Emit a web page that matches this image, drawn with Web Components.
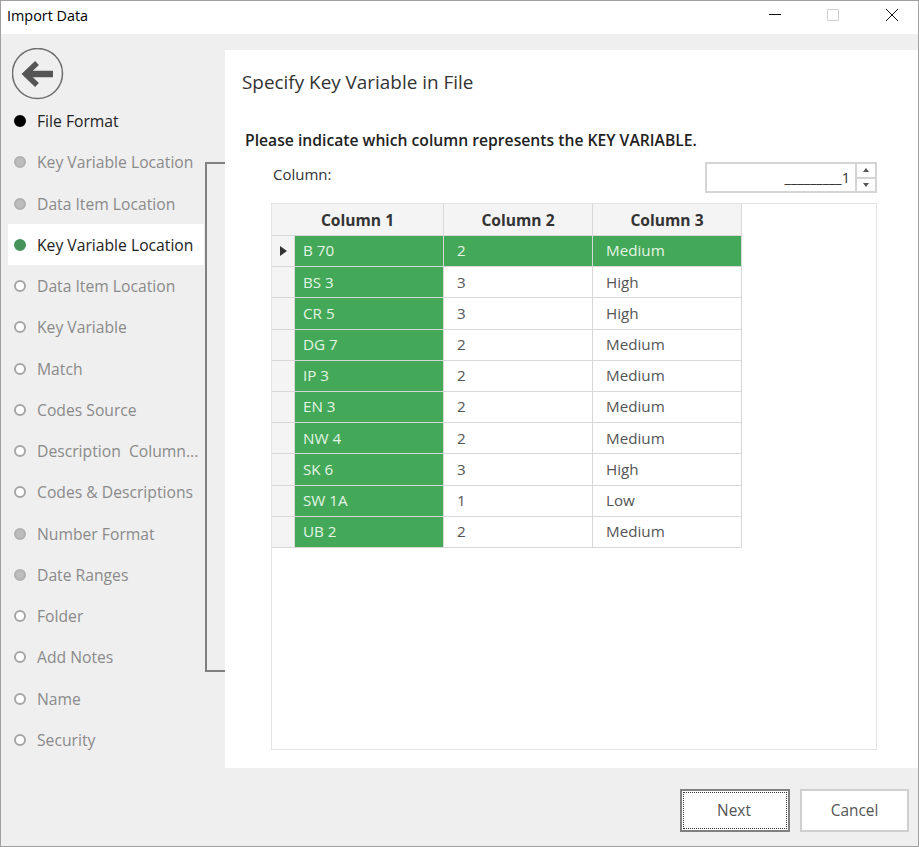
<!DOCTYPE html>
<html>
<head>
<meta charset="utf-8">
<title>Import Data</title>
<style>
  html, body { margin: 0; padding: 0; height: 100%; background: #efefef; }
  body { font-family: "Open Sans", "Noto Sans", sans-serif; }
</style>
</head>
<body>
<import-window>
  <title-bar slot="title">Import Data</title-bar>
  <wizard-nav slot="nav">
    <nav-step state="done">File Format</nav-step>
    <nav-step state="past">Key Variable Location</nav-step>
    <nav-step state="past">Data Item Location</nav-step>
    <nav-step state="current">Key Variable Location</nav-step>
    <nav-step>Data Item Location</nav-step>
    <nav-step>Key Variable</nav-step>
    <nav-step>Match</nav-step>
    <nav-step>Codes Source</nav-step>
    <nav-step>Description&nbsp; Column...</nav-step>
    <nav-step>Codes &amp; Descriptions</nav-step>
    <nav-step state="past">Number Format</nav-step>
    <nav-step state="past">Date Ranges</nav-step>
    <nav-step>Folder</nav-step>
    <nav-step>Add Notes</nav-step>
    <nav-step>Name</nav-step>
    <nav-step>Security</nav-step>
  </wizard-nav>
  <key-panel slot="main"></key-panel>
  <wiz-button slot="footer" default>Next</wiz-button>
  <wiz-button slot="footer" style="width:109px">Cancel</wiz-button>
</import-window>

<script>
class ImportWindow extends HTMLElement {
  constructor() {
    super();
    this.attachShadow({ mode: "open" });
    this.shadowRoot.innerHTML = `
      <style>
        :host {
          display: grid;
          box-sizing: border-box;
          width: 919px;
          height: 847px;
          border: 1px solid #a0a0a0;
          background: #efefef;
          grid-template-columns: 224px 1fr;
          grid-template-rows: 33px 16px 718px 1fr;
          grid-template-areas: "title title" "gap gap" "nav main" "nav footer";
        }
        .title { grid-area: title; }
        .nav { grid-area: nav; min-width: 0; }
        .main { grid-area: main; background: #fff; min-width: 0; }
        .footer {
          grid-area: footer;
          display: flex;
          justify-content: flex-end;
          gap: 10px;
          padding: 21px 9px 0 0;
        }
      </style>
      <div class="title"><slot name="title"></slot></div>
      <div class="nav"><slot name="nav"></slot></div>
      <div class="main"><slot name="main"></slot></div>
      <div class="footer"><slot name="footer"></slot></div>
    `;
  }
}

class TitleBar extends HTMLElement {
  constructor() {
    super();
    this.attachShadow({ mode: "open" });
    this.shadowRoot.innerHTML = `
      <style>
        :host {
          display: flex;
          align-items: center;
          height: 33px;
          background: #fff;
          color: #000;
          font-size: 14.4px;
          padding-left: 6px;
        }
        .text { flex: 1; position: relative; top: -2px; }
        svg { display: block; }
        .controls { display: flex; align-items: flex-start; height: 33px; gap: 46px; padding: 8px 20px 0 0; box-sizing: border-box; }
        .close { margin-left: 1px; }
      </style>
      <span class="text"><slot></slot></span>
      <div class="controls">
        <svg width="12" height="12" viewBox="0 0 12 12"><path d="M0 5.500h12" stroke="#111" fill="none"/></svg>
        <svg width="12" height="12" viewBox="0 0 12 12"><path d="M.5 .5h11v11H.5z" stroke="#cfcfcf" fill="none"/></svg>
        <svg class="close" width="12" height="12" viewBox="0 0 12 12"><path d="M0 0l12 12M12 0L0 12" stroke="#111" fill="none"/></svg>
      </div>
    `;
  }
}

class WizardNav extends HTMLElement {
  constructor() {
    super();
    this.attachShadow({ mode: "open" });
    this.shadowRoot.innerHTML = `
      <style>
        :host {
          display: flex;
          flex-direction: column;
          position: relative;
          height: 100%;
          padding-left: 7px;
          box-sizing: border-box;
        }
        .back { display: block; margin: -2px 0 0 4px; flex: none; }
        .list { margin-top: .4px; width: 196px; }
        .thumb {
          position: absolute;
          left: 204px;
          top: 112px;
          width: 20px;
          height: 510px;
          box-sizing: border-box;
          border: 2px solid #808080;
          border-right: 0;
        }
      </style>
      <svg class="back" width="52" height="52" viewBox="0 0 52 52">
        <circle cx="25.500" cy="25.500" r="25" fill="none" stroke="#6e6e6e" stroke-width="1.5"/>
        <path d="M41 26H15" stroke="#555" stroke-width="6.500" fill="none"/>
        <path d="M25 15 L13.500 26 L25 37" stroke="#555" stroke-width="5.500" fill="none"/>
      </svg>
      <div class="list"><slot></slot></div>
      <div class="thumb"></div>
    `;
  }
}

class NavStep extends HTMLElement {
  constructor() {
    super();
    this.attachShadow({ mode: "open" });
    this.shadowRoot.innerHTML = `
      <style>
        :host {
          display: flex;
          align-items: center;
          height: 41.27px;
          box-sizing: border-box;
          padding-left: 6px;
          font-size: 15.7px;
          color: #8a8a8a;
          white-space: nowrap;
          overflow: hidden;
        }
        .dot {
          width: 12px;
          height: 12px;
          box-sizing: border-box;
          border-radius: 50%;
          border: 2px solid #a6a6a6;
          background: #fff;
          margin-right: 11px;
          flex: none;
        }
        :host([state="done"]) { color: #222; }
        :host([state="done"]) .dot { background: #000; border-color: #000; }
        :host([state="past"]) .dot { background: #bdbdbd; border-color: #b0b0b0; }
        :host([state="current"]) { background: #fff; color: #222; }
        :host([state="current"]) .dot { background: #43935a; border-color: #43935a; }
      </style>
      <span class="dot"></span><span><slot></slot></span>
    `;
  }
}

class SpinEdit extends HTMLElement {
  constructor() {
    super();
    this.attachShadow({ mode: "open" });
    this.shadowRoot.innerHTML = `
      <style>
        :host {
          display: flex;
          box-sizing: border-box;
          width: 172px;
          height: 31px;
          border: 2px solid #d4d4d4;
          background: #fff;
          color: #333;
          font-size: 14.5px;
        }
        .value { flex: 1; text-align: right; line-height: 27px; padding-right: 5px; white-space: nowrap; overflow: hidden; }
        .btns { border-left: 2px solid #d4d4d4; display: flex; flex-direction: column; width: 18px; }
        .btns div { flex: 1; display: flex; align-items: center; justify-content: center; }
        .btns div + div { border-top: 2px solid #d4d4d4; }
        i { display: block; width: 0; height: 0; border: 3.5px solid transparent; }
        .up { border-bottom: 4px solid #555; border-top: 0; }
        .down { border-top: 4px solid #555; border-bottom: 0; }
      </style>
      <span class="value"><slot></slot></span>
      <div class="btns"><div><i class="up"></i></div><div><i class="down"></i></div></div>
    `;
  }
}

class DataGrid extends HTMLElement {
  constructor() {
    super();
    this.attachShadow({ mode: "open" });
    const rows = [
      ["B 70", "2", "Medium"], ["BS 3", "3", "High"], ["CR 5", "3", "High"],
      ["DG 7", "2", "Medium"], ["IP 3", "2", "Medium"], ["EN 3", "2", "Medium"],
      ["NW 4", "2", "Medium"], ["SK 6", "3", "High"], ["SW 1A", "1", "Low"],
      ["UB 2", "2", "Medium"]
    ];
    const body = rows.map((r, i) => `
      <div class="ind">${i === 0 ? '<i></i>' : ''}</div>
      <div class="cell key">${r[0]}</div>
      <div class="cell ${i === 0 ? 'sel' : ''}">${r[1]}</div>
      <div class="cell ${i === 0 ? 'sel' : ''}">${r[2]}</div>`).join("");
    this.shadowRoot.innerHTML = `
      <style>
        :host {
          display: block;
          box-sizing: border-box;
          width: 606px;
          height: 547px;
          border: 1px solid #e3e3e3;
          background: #fff;
          font-size: 15.2px;
          color: #555;
        }
        .grid {
          display: grid;
          grid-template-columns: 23px 149px 149px 149px;
          grid-template-rows: 32px repeat(10, 31.2px);
          width: max-content;
        }
        .grid > div { box-sizing: border-box; border-right: 1px solid #d8d8d8; border-bottom: 1px solid #d8d8d8; }
        .head {
          background: #f4f4f4;
          font-weight: 700;
          color: #333;
          display: flex;
          align-items: center;
          justify-content: center;
          font-size: 15.6px;
        }
        .corner { grid-column: 1 / 3; }
        .ind { background: #f4f4f4; display: flex; align-items: center; justify-content: center; }
        .ind i { width: 0; height: 0; border: 5px solid transparent; border-left: 7px solid #333; border-right: 0; }
        .cell { display: flex; align-items: center; padding-left: 13px; line-height: 1; }
        .grid > .key { background: #43a857; color: #e4f4e6; padding-left: 8px; }
        .grid > .sel { background: #43a857; color: #e4f4e6; }
      </style>
      <div class="grid">
        <div class="head corner">Column 1</div>
        <div class="head">Column 2</div>
        <div class="head">Column 3</div>
        ${body}
      </div>
    `;
  }
}

class KeyPanel extends HTMLElement {
  constructor() {
    super();
    this.attachShadow({ mode: "open" });
    this.shadowRoot.innerHTML = `
      <style>
        :host { display: block; height: 100%; padding: 0 0 0 17px; box-sizing: border-box; color: #333; }
        h1 { margin: 0; font-size: 18.9px; font-weight: 400; line-height: 24px; padding-top: 20px; height: 44px; color: #333; }
        .ask { margin: 16px 0 0 3px; font-size: 15.7px; font-weight: 600; line-height: 20px; color: #222; height: 20px; white-space: nowrap; }
        .col { display: flex; justify-content: space-between; align-items: flex-start; margin: 12px 0 0 31px; width: 604px; height: 41px; }
        .col span { font-size: 15px; line-height: 20px; padding-top: 2px; }
        .wrap { margin-left: 29px; }
      </style>
      <h1>Specify Key Variable in File</h1>
      <div class="ask">Please indicate which column represents the KEY VARIABLE.</div>
      <div class="col"><span>Column:</span><spin-edit>_________1</spin-edit></div>
      <div class="wrap"><data-grid></data-grid></div>
    `;
  }
}

class WizButton extends HTMLElement {
  constructor() {
    super();
    this.attachShadow({ mode: "open" });
    this.shadowRoot.innerHTML = `
      <style>
        :host {
          display: flex;
          align-items: center;
          justify-content: center;
          box-sizing: border-box;
          width: 110px;
          height: 43px;
          background: #fff;
          border: 2px solid #cfcfcf;
          color: #555;
          font-size: 15.4px;
          position: relative;
        }
        :host([default]) { border-color: #808080; padding-right: 2px; }
        :host([default]) .focus {
          position: absolute;
          inset: 1px;
          border: 1px dotted #333;
        }
      </style>
      <div class="focus"></div>
      <slot></slot>
    `;
  }
}

customElements.define("import-window", ImportWindow);
customElements.define("title-bar", TitleBar);
customElements.define("wizard-nav", WizardNav);
customElements.define("nav-step", NavStep);
customElements.define("spin-edit", SpinEdit);
customElements.define("data-grid", DataGrid);
customElements.define("key-panel", KeyPanel);
customElements.define("wiz-button", WizButton);
</script>
</body>
</html>
